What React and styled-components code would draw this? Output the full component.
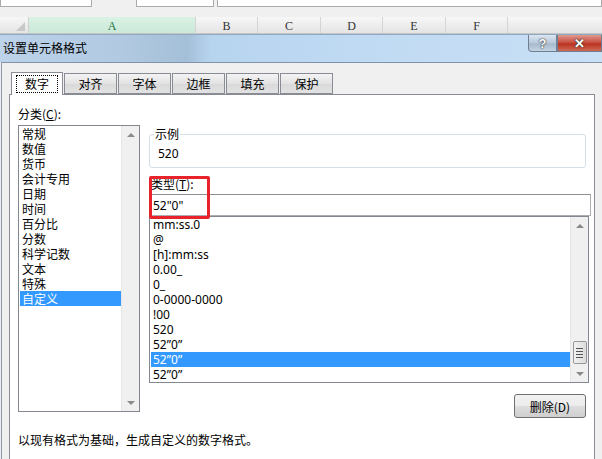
import styled, { createGlobalStyle } from "styled-components";

const Global = createGlobalStyle`
  html, body {
    margin: 0;
    padding: 0;
    background: #f0f0f0;
    overflow: hidden;
  }
  body {
    font-family: "Noto Sans", "Noto Sans CJK SC", sans-serif;
    font-size: 12px;
    color: #000;
  }
`;

const columns = [
  { name: "A", width: 167, active: true },
  { name: "B", width: 62 },
  { name: "C", width: 63 },
  { name: "D", width: 62 },
  { name: "E", width: 63 },
  { name: "F", width: 62 },
  { name: "", width: 95 },
];

const categories = [
  "常规", "数值", "货币", "会计专用", "日期", "时间",
  "百分比", "分数", "科学记数", "文本", "特殊", "自定义",
];

const formats = [
  "mm:ss.0", "@", "[h]:mm:ss", "0.00_", "0_", "0-0000-0000",
  "!00", "520", "52”0”", "52”0”", "52”0”",
];

const tabs = ["数字", "对齐", "字体", "边框", "填充", "保护"];

const Sheet = styled.div`
  width: 602px;
  height: 459px;
  display: flex;
  flex-direction: column;
  overflow: hidden;
`;

const FormulaRow = styled.div`
  height: 17px;
  display: flex;
  align-items: flex-start;
`;

const NameBox = styled.div`
  height: 6px;
  width: ${(p) => p.$w}px;
  margin-left: ${(p) => p.$ml}px;
  background: #fff;
  border: 1px solid #ababab;
  border-top: none;
`;

const HeaderRow = styled.div`
  height: 16px;
  display: flex;
  background: linear-gradient(#f7f7f7, #e4e4e4);
  border-bottom: 1px solid #c5c5c5;
`;

const Corner = styled.div`
  width: 28px;
  flex: none;
  position: relative;
  border-right: 1px solid #d0d0d0;
  &::after {
    content: "";
    position: absolute;
    right: 3px;
    bottom: 2px;
    border-left: 9px solid transparent;
    border-bottom: 9px solid #c8c8c8;
  }
`;

const ColHead = styled.div`
  flex: none;
  width: ${(p) => p.$w}px;
  box-sizing: border-box;
  border-right: 1px solid #d4d4d4;
  display: flex;
  align-items: flex-end;
  justify-content: center;
  font-family: "Liberation Serif", serif;
  font-size: 12px;
  line-height: 14px;
  color: ${(p) => (p.$active ? "#217346" : "#333")};
  background: ${(p) => (p.$active ? "linear-gradient(#d9f2e4, #cbe9d8)" : "transparent")};
`;

const TitleBar = styled.div`
  height: 27px;
  display: flex;
  align-items: flex-start;
  background: linear-gradient(
    90deg,
    #bcd3ea 0%,
    #b1cae1 20%,
    #a4bfd8 31%,
    #b7d4ef 35%,
    #c0daf3 60%,
    #c9e0f5 100%
  );
  border-top: 1px solid #8fa7c0;
`;

const Title = styled.div`
  padding: 6px 0 0 3px;
  font-family: "Noto Sans CJK SC", sans-serif;
  font-size: 12px;
  line-height: 14px;
  flex: 1;
`;

const CapButton = styled.div`
  width: ${(p) => p.$w}px;
  height: 17px;
  box-sizing: border-box;
  display: flex;
  align-items: center;
  justify-content: center;
  font-family: "Liberation Sans", sans-serif;
  font-weight: bold;
  font-size: 13px;
  color: #fff;
  text-shadow: 0 0 2px #333, 0 0 1px #222;
  border: 1px solid #6b7f95;
  border-top: none;
  background: ${(p) =>
    p.$close
      ? "linear-gradient(#e09a8e, #c7493a 50%, #b8321f 55%, #d06a55)"
      : "linear-gradient(#dbe6f1, #b8c9da 50%, #a6b9cc 55%, #c4d3e2)"};
  border-bottom-left-radius: ${(p) => (p.$close ? "0" : "4px")};
`;

const Body = styled.div`
  flex: 1;
  border-top: 1px solid #8093a8;
  border-left: 1px solid #8c9aab;
  margin-left: 1px;
  display: flex;
  flex-direction: column;
`;

const TabStrip = styled.div`
  display: flex;
  align-items: flex-end;
  height: 31px;
  padding-left: 9px;
`;

const Tab = styled.div`
  width: ${(p) => (p.$active ? 52 : 53)}px;
  height: ${(p) => (p.$active ? 23 : 21)}px;
  box-sizing: border-box;
  margin-right: 1px;
  border: 1px solid #898c95;
  border-bottom: ${(p) => (p.$active ? "none" : "1px solid #898c95")};
  background: ${(p) => (p.$active ? "#fff" : "linear-gradient(#f3f3f3, #e3e3e3 50%, #d9d9d9 51%, #e2e2e2)")};
  display: flex;
  align-items: center;
  justify-content: center;
  font-family: "Noto Sans CJK SC", sans-serif;
  font-size: 12px;
  position: relative;
  z-index: ${(p) => (p.$active ? 2 : 1)};
  margin-bottom: ${(p) => (p.$active ? "-1px" : "0")};
`;

const Focus = styled.span`
  border: 1px dotted #000;
  padding: 1px 8px;
  line-height: 14px;
`;

const Panel = styled.div`
  margin-left: 7px;
  width: 586px;
  flex: 1;
  box-sizing: border-box;
  background: #fff;
  border: 1px solid #898c95;
  border-bottom: none;
  padding: 11px 0 0 8px;
  display: flex;
  flex-direction: column;
`;

const Columns = styled.div`
  display: flex;
  gap: 9px;
  align-items: flex-start;
`;

const LeftCol = styled.div`
  width: 122px;
  display: flex;
  flex-direction: column;
`;

const RightCol = styled.div`
  width: 442px;
  display: flex;
  flex-direction: column;
  padding-top: 22px;
  position: relative;
`;

const Label = styled.div`
  font-family: "Noto Sans CJK SC", sans-serif;
  font-size: 12px;
  line-height: 16px;
  height: 16px;
  padding-left: ${(p) => p.$pl || 0}px;
  margin-top: ${(p) => p.$mt || 0}px;
  u {
    text-decoration: underline;
  }
`;

const ListBox = styled.div`
  margin-top: ${(p) => p.$mt || 0}px;
  width: ${(p) => p.$w}px;
  height: ${(p) => p.$h}px;
  box-sizing: border-box;
  border: 1px solid #828790;
  display: flex;
  background: #fff;
`;

const Items = styled.div`
  flex: 1;
  padding: ${(p) => p.$pt}px 0 0 1px;
`;

const Item = styled.div`
  height: 15px;
  line-height: 15px;
  padding-left: ${(p) => p.$pl}px;
  font-family: ${(p) => (p.$latin ? '"Noto Sans", "Noto Sans CJK SC", sans-serif' : '"Noto Sans CJK SC", sans-serif')};
  font-size: 12px;
  background: ${(p) => (p.$sel ? "#3399ff" : "transparent")};
  color: ${(p) => (p.$sel ? "#fff" : "#000")};
  white-space: nowrap;
  overflow: hidden;
`;

const Scroll = styled.div`
  width: 17px;
  background: #f0f0f0;
  border-left: 1px solid #e6e6e6;
  display: flex;
  flex-direction: column;
  align-items: center;
`;

const Arrow = styled.div`
  height: 17px;
  width: 17px;
  display: flex;
  align-items: center;
  justify-content: center;
  &::after {
    content: "";
    border-left: 4px solid transparent;
    border-right: 4px solid transparent;
    ${(p) => (p.$down ? "border-top: 4px solid #8a8a8a;" : "border-bottom: 4px solid #8a8a8a;")}
  }
`;

const Track = styled.div`
  flex: 1;
  width: 100%;
  display: flex;
  flex-direction: column;
  justify-content: flex-end;
  align-items: center;
`;

const Thumb = styled.div`
  width: 14px;
  height: 23px;
  box-sizing: border-box;
  border: 1px solid #979797;
  border-radius: 2px;
  background: linear-gradient(90deg, #f2f2f2, #dcdcdc);
  margin-bottom: ${(p) => p.$mb}px;
  display: flex;
  flex-direction: column;
  justify-content: center;
  align-items: center;
  gap: 2px;
  span {
    width: 7px;
    height: 1px;
    background: #555;
  }
`;

const Group = styled.fieldset`
  margin: 0;
  width: 437px;
  height: 40px;
  box-sizing: border-box;
  border: 1px solid #d5dfe5;
  border-radius: 3px;
  padding: 0 0 0 8px;
  legend {
    padding: 0 1px;
    margin-left: -4px;
    font-family: "Noto Sans CJK SC", sans-serif;
    font-size: 12px;
    line-height: 12px;
  }
`;

const Sample = styled.div`
  margin-top: 7px;
  font-size: 12px;
  line-height: 14px;
`;

const TypeInput = styled.div`
  margin-top: 2px;
  width: 442px;
  height: 22px;
  box-sizing: border-box;
  border: 1px solid #abadb3;
  border-top-color: #8e8f8f;
  padding-left: 3px;
  display: flex;
  align-items: center;
  font-size: 12px;
`;

const Highlight = styled.div`
  position: absolute;
  left: 0;
  top: 70px;
  width: 61px;
  height: 43px;
  box-sizing: border-box;
  border: 3px solid #e8232b;
  border-radius: 2px;
  pointer-events: none;
`;

const Button = styled.div`
  align-self: flex-end;
  margin: 11px 5px 0 0;
  width: 72px;
  height: 24px;
  box-sizing: border-box;
  border: 1px solid #707070;
  border-radius: 3px;
  background: linear-gradient(#f2f2f2, #ebebeb 50%, #dddddd 51%, #cfcfcf);
  display: flex;
  align-items: center;
  justify-content: center;
  font-family: "Noto Sans CJK SC", sans-serif;
  font-size: 12px;
`;

const Hint = styled.div`
  margin-top: 14px;
  font-family: "Noto Sans CJK SC", sans-serif;
  font-size: 12px;
  line-height: 16px;
`;

const App = () => {
  return (
    <>
      <Global />
      <Sheet>
        <FormulaRow>
          <NameBox $w={91} $ml={0} />
          <NameBox $w={76} $ml={44} />
          <NameBox $w={386} $ml={3} />
        </FormulaRow>
        <HeaderRow>
          <Corner />
          {columns.map((c, i) => (
            <ColHead key={i} $w={c.width} $active={c.active}>
              {c.name}
            </ColHead>
          ))}
        </HeaderRow>
        <TitleBar>
          <Title>设置单元格格式</Title>
          <CapButton $w={29}>?</CapButton>
          <CapButton $w={45} $close>✕</CapButton>
        </TitleBar>
        <Body>
          <TabStrip>
            {tabs.map((t, i) => (
              <Tab key={t} $active={i === 0}>
                {i === 0 ? <Focus>{t}</Focus> : t}
              </Tab>
            ))}
          </TabStrip>
          <Panel>
            <Columns>
              <LeftCol>
                <Label>
                  分类(<u>C</u>):
                </Label>
                <ListBox $mt={3} $w={122} $h={287}>
                  <Items $pt={0}>
                    {categories.map((c, i) => (
                      <Item key={c} $pl={2} $sel={i === categories.length - 1}>
                        {c}
                      </Item>
                    ))}
                  </Items>
                  <Scroll>
                    <Arrow />
                    <Track />
                    <Arrow $down />
                  </Scroll>
                </ListBox>
              </LeftCol>
              <RightCol>
                <Group>
                  <legend>示例</legend>
                  <Sample>520</Sample>
                </Group>
                <Label $pl={2} $mt={8}>
                  类型(<u>T</u>):
                </Label>
                <TypeInput>52"0"</TypeInput>
                <ListBox $w={440} $h={167}>
                  <Items $pt={0}>
                    {formats.map((f, i) => (
                      <Item key={i} $latin $pl={2} $sel={i === 9}>
                        {f}
                      </Item>
                    ))}
                  </Items>
                  <Scroll>
                    <Arrow />
                    <Track>
                      <Thumb $mb={1}>
                        <span />
                        <span />
                        <span />
                        <span />
                      </Thumb>
                    </Track>
                    <Arrow $down />
                  </Scroll>
                </ListBox>
                <Highlight />
                <Button>删除(D)</Button>
              </RightCol>
            </Columns>
            <Hint>以现有格式为基础，生成自定义的数字格式。</Hint>
          </Panel>
        </Body>
      </Sheet>
    </>
  );
};

export default App;
